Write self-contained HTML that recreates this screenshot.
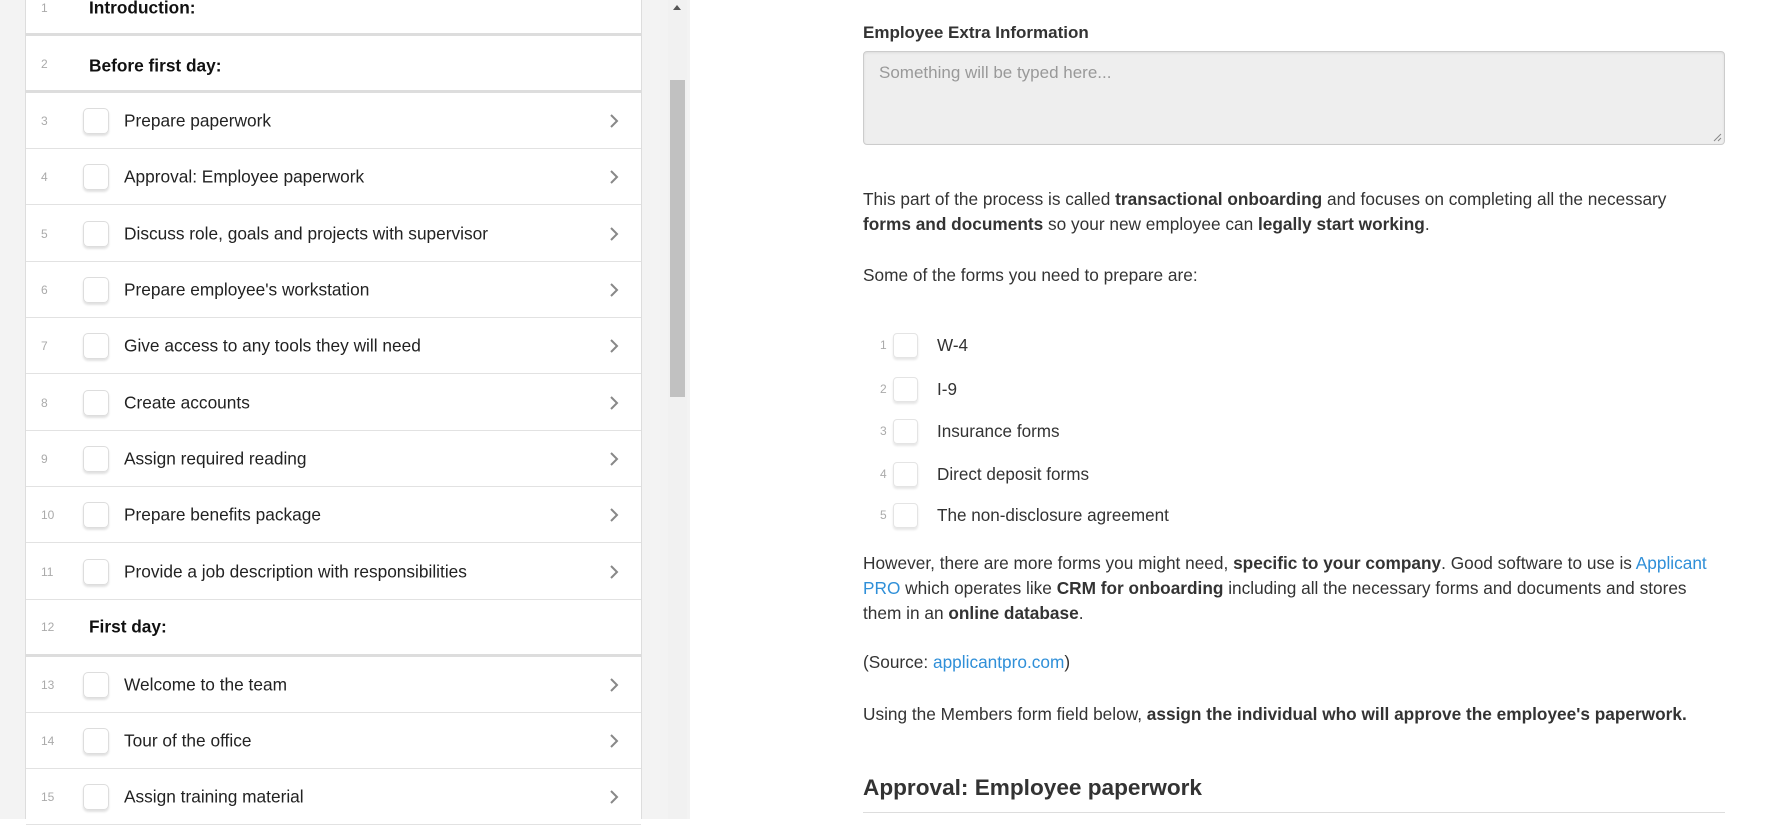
<!DOCTYPE html>
<html><head><meta charset="utf-8"><style>
*{box-sizing:border-box;margin:0;padding:0}
body{width:1787px;height:819px;overflow:hidden;background:#fff;font-family:"Liberation Sans",Arial,sans-serif;color:#222;position:relative}
.left{position:absolute;left:0;top:0;width:690px;height:819px;background:#f3f3f3}
.card{position:absolute;left:25px;top:0;width:617px;height:819px;background:#fff;border-left:1px solid #ddd;border-right:1px solid #ddd}
.row{position:absolute;left:0;width:615px;height:56px;border-bottom:1px solid #e2e2e2}
.row .n{position:absolute;left:15px;top:50%;transform:translateY(-50%);font-size:12px;color:#aaa}
.row .cb{position:absolute;left:57px;top:50%;margin-top:-13px;width:26px;height:26px;border:1px solid #ddd;border-radius:5px;box-shadow:0 2px 2px rgba(0,0,0,.12)}
.row .t{position:absolute;left:98px;top:50%;transform:translateY(-50%);font-size:17.3px;color:#222;white-space:nowrap}
.row .h{position:absolute;left:63px;top:50%;transform:translateY(-50%);font-size:17.3px;font-weight:bold;color:#111}
.row svg{position:absolute;left:582px;top:50%;margin-top:-8px}
.thick{border-bottom:3px solid #ddd}
.sb{position:absolute;left:668px;top:0;width:19px;height:819px;background:#f1f1f1}
.thumb{position:absolute;left:670px;top:80px;width:15px;height:317px;background:#c1c1c1}
.right{position:absolute;left:863px;top:0;width:862px;font-size:17.25px;line-height:25px;color:#333}
.ab{position:absolute}
a{color:#2f8fd8;text-decoration:none}
.ci{position:absolute;left:0;height:25px}
.ci .n{position:absolute;left:17px;top:0;font-size:12px;color:#aaa}
.ci .cb{position:absolute;left:30px;top:0;width:25px;height:25px;border:1px solid #e4e4e4;border-radius:4px;box-shadow:0 2px 2px rgba(0,0,0,.1)}
.ci .t{position:absolute;left:74px;top:0;white-space:nowrap;font-size:17.1px}
</style></head><body>
<div class="left">
<div class="card">
<div class="row thick" style="top:-18px;height:54px"><span class="n">1</span><span class="h">Introduction:</span></div>
<div class="row thick" style="top:37px;height:56px"><span class="n">2</span><span class="h" style="margin-top:2px">Before first day:</span></div>
<div class="row" style="top:93px"><span class="n">3</span><span class="cb"></span><span class="t">Prepare paperwork</span><svg width="12" height="16" viewBox="0 0 12 16"><path d="M3 2l6 6-6 6" fill="none" stroke="#888" stroke-width="2"/></svg></div>
<div class="row" style="top:149px"><span class="n">4</span><span class="cb"></span><span class="t">Approval: Employee paperwork</span><svg width="12" height="16" viewBox="0 0 12 16"><path d="M3 2l6 6-6 6" fill="none" stroke="#888" stroke-width="2"/></svg></div>
<div class="row" style="top:206px"><span class="n">5</span><span class="cb"></span><span class="t">Discuss role, goals and projects with supervisor</span><svg width="12" height="16" viewBox="0 0 12 16"><path d="M3 2l6 6-6 6" fill="none" stroke="#888" stroke-width="2"/></svg></div>
<div class="row" style="top:262px"><span class="n">6</span><span class="cb"></span><span class="t">Prepare employee's workstation</span><svg width="12" height="16" viewBox="0 0 12 16"><path d="M3 2l6 6-6 6" fill="none" stroke="#888" stroke-width="2"/></svg></div>
<div class="row" style="top:318px"><span class="n">7</span><span class="cb"></span><span class="t">Give access to any tools they will need</span><svg width="12" height="16" viewBox="0 0 12 16"><path d="M3 2l6 6-6 6" fill="none" stroke="#888" stroke-width="2"/></svg></div>
<div class="row" style="top:375px"><span class="n">8</span><span class="cb"></span><span class="t">Create accounts</span><svg width="12" height="16" viewBox="0 0 12 16"><path d="M3 2l6 6-6 6" fill="none" stroke="#888" stroke-width="2"/></svg></div>
<div class="row" style="top:431px"><span class="n">9</span><span class="cb"></span><span class="t">Assign required reading</span><svg width="12" height="16" viewBox="0 0 12 16"><path d="M3 2l6 6-6 6" fill="none" stroke="#888" stroke-width="2"/></svg></div>
<div class="row" style="top:487px"><span class="n">10</span><span class="cb"></span><span class="t">Prepare benefits package</span><svg width="12" height="16" viewBox="0 0 12 16"><path d="M3 2l6 6-6 6" fill="none" stroke="#888" stroke-width="2"/></svg></div>
<div class="row" style="top:544px"><span class="n">11</span><span class="cb"></span><span class="t">Provide a job description with responsibilities</span><svg width="12" height="16" viewBox="0 0 12 16"><path d="M3 2l6 6-6 6" fill="none" stroke="#888" stroke-width="2"/></svg></div>
<div class="row thick" style="top:600px;height:57px"><span class="n">12</span><span class="h">First day:</span></div>
<div class="row" style="top:657px"><span class="n">13</span><span class="cb"></span><span class="t">Welcome to the team</span><svg width="12" height="16" viewBox="0 0 12 16"><path d="M3 2l6 6-6 6" fill="none" stroke="#888" stroke-width="2"/></svg></div>
<div class="row" style="top:713px"><span class="n">14</span><span class="cb"></span><span class="t">Tour of the office</span><svg width="12" height="16" viewBox="0 0 12 16"><path d="M3 2l6 6-6 6" fill="none" stroke="#888" stroke-width="2"/></svg></div>
<div class="row" style="top:769px"><span class="n">15</span><span class="cb"></span><span class="t">Assign training material</span><svg width="12" height="16" viewBox="0 0 12 16"><path d="M3 2l6 6-6 6" fill="none" stroke="#888" stroke-width="2"/></svg></div>
</div>
<div class="sb"></div>
<div class="thumb"></div>
<svg style="position:absolute;left:671px;top:3px" width="12" height="8"><path d="M2 7L6 2L10 7Z" fill="#555"/></svg>
</div>

<div class="right">
<div class="ab" style="top:20px;font-weight:bold;font-size:17px;color:#333">Employee Extra Information</div>
<div class="ab" style="top:51px;left:0;width:862px;height:94px;background:#eee;border:1px solid #ccc;border-radius:4px;box-shadow:inset 0 1px 2px rgba(0,0,0,.08)">
<div style="position:absolute;left:15px;top:8px;color:#999;font-size:17px">Something will be typed here...</div>
<svg style="position:absolute;right:2px;bottom:2px" width="10" height="10"><path d="M9 2L2 9M9 6L6 9" stroke="#888" stroke-width="1"/></svg>
</div>
<div class="ab" style="top:187px;width:862px">This part of the process is called <b>transactional onboarding</b> and focuses on completing all the necessary<br><b>forms and documents</b> so your new employee can <b>legally start working</b>.</div>
<div class="ab" style="top:263px">Some of the forms you need to prepare are:</div>
<div class="ci" style="top:333px"><span class="n">1</span><span class="cb"></span><span class="t">W-4</span></div>
<div class="ci" style="top:377px"><span class="n">2</span><span class="cb"></span><span class="t">I-9</span></div>
<div class="ci" style="top:419px"><span class="n">3</span><span class="cb"></span><span class="t">Insurance forms</span></div>
<div class="ci" style="top:462px"><span class="n">4</span><span class="cb"></span><span class="t">Direct deposit forms</span></div>
<div class="ci" style="top:503px"><span class="n">5</span><span class="cb"></span><span class="t">The non-disclosure agreement</span></div>
<div class="ab" style="top:551px;width:862px">However, there are more forms you might need, <b>specific to your company</b>. Good software to use is <a>Applicant</a><br><a>PRO</a> which operates like <b>CRM for onboarding</b> including all the necessary forms and documents and stores<br>them in an <b>online database</b>.</div>
<div class="ab" style="top:650px">(Source: <a>applicantpro.com</a>)</div>
<div class="ab" style="top:702px;white-space:nowrap">Using the Members form field below, <b>assign the individual who will approve the employee's paperwork.</b></div>
<div class="ab" style="top:773px;font-size:22.6px;font-weight:bold;line-height:30px;color:#333">Approval: Employee paperwork</div>
<div class="ab" style="top:812px;left:0;width:862px;height:1px;background:#ddd"></div>
</div>
</body></html>
